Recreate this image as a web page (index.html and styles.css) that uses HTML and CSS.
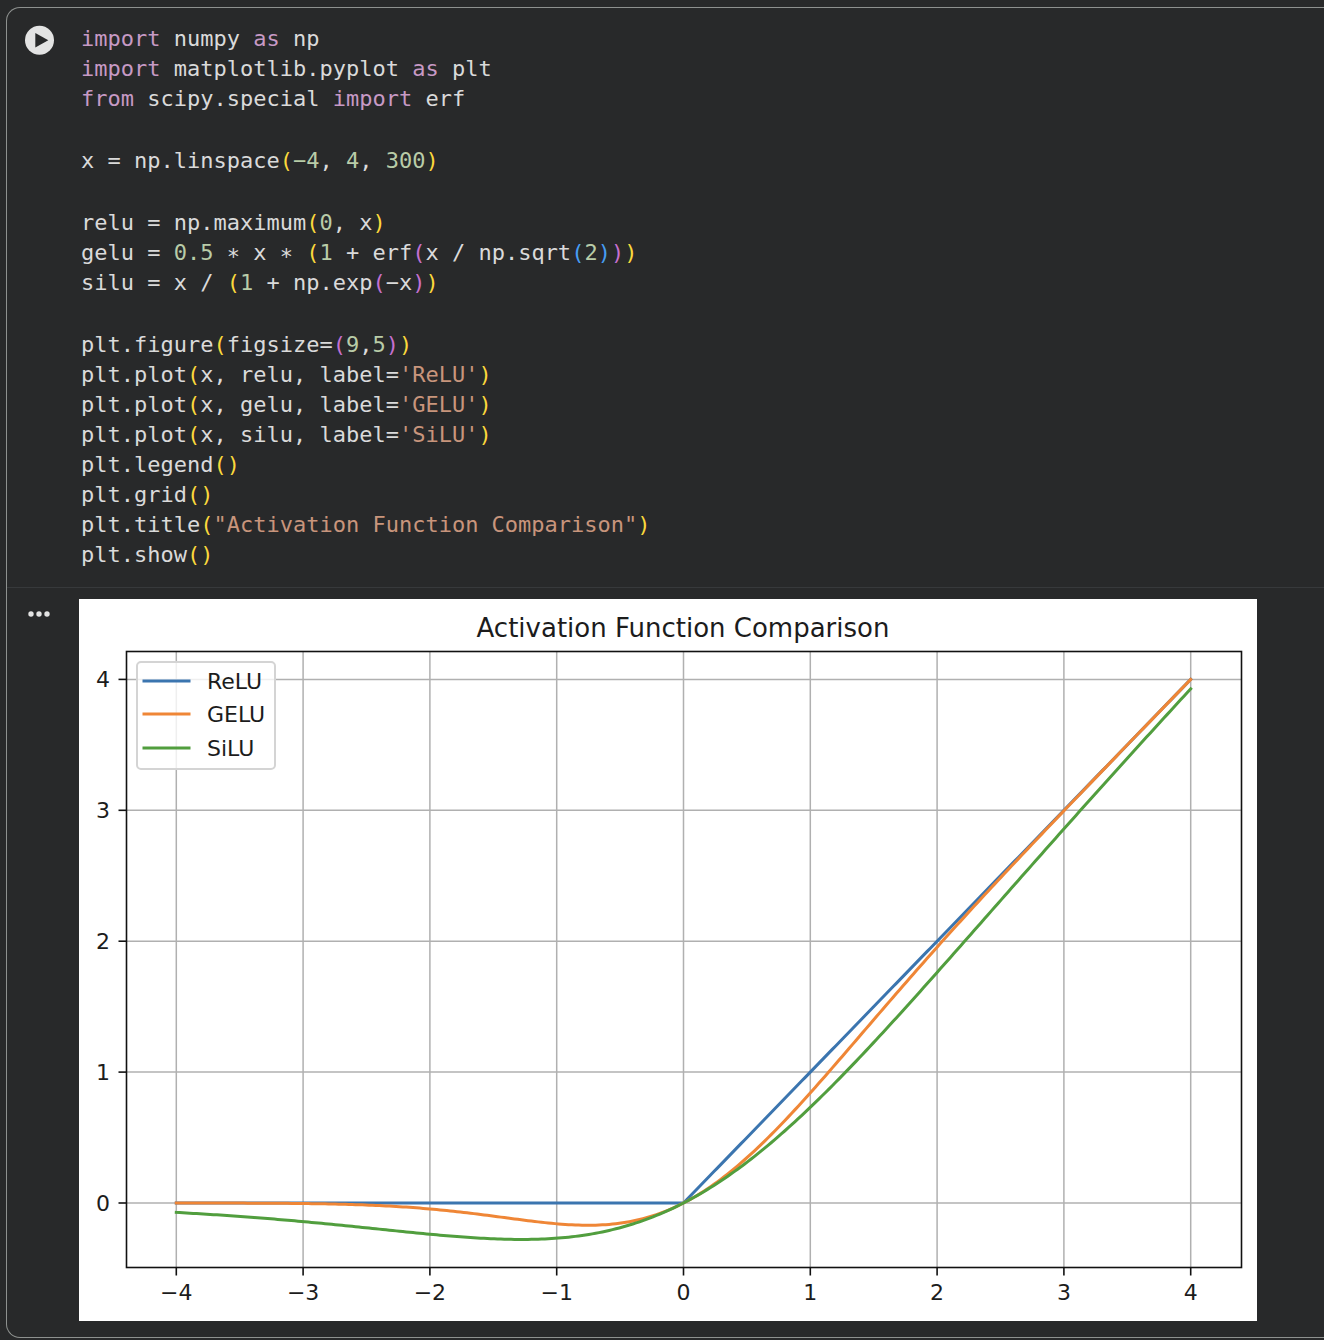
FILE: index.html
```html
<!DOCTYPE html>
<html lang="en">

<head>
    <meta charset="UTF-8">
    <meta name="viewport" content="width=device-width, initial-scale=1.0">
    <title>Activation Function Comparison</title>
    <link rel="stylesheet" href="styles.css">
</head>

<body>
    <main class="cell">
        <section class="cell-input">
            <div class="gutter">
                <button class="icon-button run-button" type="button" aria-label="Run cell">
                    <svg width="30" height="30" viewBox="0 0 30 30">
                        <circle cx="15.5" cy="15.3" r="14.5" fill="#e3e3e3"/>
                        <path d="M11.3 8v14.6L24.3 15.3z" fill="#28292a"/>
                    </svg>
                </button>
            </div>
            <div class="code">
<pre><span class="kw">import</span> numpy <span class="kw">as</span> np
<span class="kw">import</span> matplotlib.pyplot <span class="kw">as</span> plt
<span class="kw">from</span> scipy.special <span class="kw">import</span> erf</pre>
<pre>x = np.linspace<span class="b1">(</span><span class="num">−4</span>, <span class="num">4</span>, <span class="num">300</span><span class="b1">)</span></pre>
<pre>relu = np.maximum<span class="b1">(</span><span class="num">0</span>, x<span class="b1">)</span>
gelu = <span class="num">0.5</span> ∗ x ∗ <span class="b1">(</span><span class="num">1</span> + erf<span class="b2">(</span>x / np.sqrt<span class="b3">(</span><span class="num">2</span><span class="b3">)</span><span class="b2">)</span><span class="b1">)</span>
silu = x / <span class="b1">(</span><span class="num">1</span> + np.exp<span class="b2">(</span>−x<span class="b2">)</span><span class="b1">)</span></pre>
<pre>plt.figure<span class="b1">(</span>figsize=<span class="b2">(</span><span class="num">9</span>,<span class="num">5</span><span class="b2">)</span><span class="b1">)</span>
plt.plot<span class="b1">(</span>x, relu, label=<span class="str">'ReLU'</span><span class="b1">)</span>
plt.plot<span class="b1">(</span>x, gelu, label=<span class="str">'GELU'</span><span class="b1">)</span>
plt.plot<span class="b1">(</span>x, silu, label=<span class="str">'SiLU'</span><span class="b1">)</span>
plt.legend<span class="b1">()</span>
plt.grid<span class="b1">()</span>
plt.title<span class="b1">(</span><span class="str">"Activation Function Comparison"</span><span class="b1">)</span>
plt.show<span class="b1">()</span></pre>
            </div>
        </section>

        <section class="cell-output">
            <div class="gutter">
                <button class="icon-button" type="button" aria-label="Output actions">
                    <svg width="30" height="30" viewBox="0 0 30 30" fill="#e3e3e3">
                        <circle cx="7" cy="15" r="2.7"/>
                        <circle cx="15" cy="15" r="2.7"/>
                        <circle cx="23" cy="15" r="2.7"/>
                    </svg>
                </button>
            </div>
            <div class="figure">
                <svg class="chart" viewBox="0 0 1178 722" role="img" aria-label="Activation Function Comparison">
                    <g id="grid" class="grid"></g>
                    <g id="curves" class="curves"></g>
                    <rect class="frame" x="47.5" y="52.5" width="1115" height="616"/>
                    <g id="ticks" class="ticks"></g>
                    <text class="title" x="604" y="38">Activation Function Comparison</text>
                    <g class="legend">
                        <rect x="58" y="63" width="138" height="107" rx="4"/>
                        <path class="relu" d="M65 82H110"/>
                        <path class="gelu" d="M65 115H110"/>
                        <path class="silu" d="M65 149H110"/>
                        <text x="128" y="90">ReLU</text>
                        <text x="128" y="123">GELU</text>
                        <text x="128" y="157">SiLU</text>
                    </g>
                </svg>
            </div>
        </section>
    </main>

    <script src="script.js"></script>
</body>

</html>
```
FILE: styles.css
```css
* {
    margin: 0;
    padding: 0;
    box-sizing: border-box;
}

body {
    background: #28292a;
    color: #dadada;
    font-family: "DejaVu Sans", sans-serif;
    padding: 7px 0 2px 6px;
}

.cell {
    border: 1px solid #8e918f;
    border-right: none;
    border-radius: 14px 0 0 14px;
}

.cell-input,
.cell-output {
    display: flex;
}

.cell-input {
    padding: 16px 0 17px;
    border-bottom: 1px solid #37393b;
}

.cell-output {
    padding: 11px 0 16px;
}

.gutter {
    flex: 0 0 72px;
    padding-left: 17px;
}

.icon-button {
    display: block;
    width: 30px;
    height: 30px;
    background: none;
    border: none;
    cursor: pointer;
}

.run-button {
    margin-top: 1px;
}

.code {
    display: flex;
    flex-direction: column;
    gap: 32px;
    padding-left: 2px;
}

.code pre {
    font-family: "DejaVu Sans Mono", monospace;
    font-size: 22px;
    line-height: 30px;
}

.kw {
    color: #c79ac5;
}

.num {
    color: #b9cca8;
}

.str {
    color: #c8957c;
}

.b1 {
    color: #fbd83c;
}

.b2 {
    color: #c670cf;
}

.b3 {
    color: #479df2;
}

.figure {
    flex: 1;
    min-width: 0;
}

.chart {
    display: block;
    width: 100%;
    max-width: 1178px;
    background: #fff;
}

.chart text {
    font-size: 22px;
    fill: #1c1c1c;
}

.chart .title {
    font-size: 26px;
    text-anchor: middle;
}

.grid path {
    stroke: #b0b0b0;
    stroke-width: 1.5;
}

.frame {
    fill: none;
    stroke: #111;
    stroke-width: 1.6;
}

.ticks path {
    stroke: #111;
    stroke-width: 1.6;
}

.ticks .x-label {
    text-anchor: middle;
}

.ticks .y-label {
    text-anchor: end;
}

.curves path,
.legend path {
    fill: none;
    stroke-width: 3;
    stroke-linecap: square;
    stroke-linejoin: round;
}

.chart .relu {
    stroke: #3b75af;
}

.chart .gelu {
    stroke: #ef8636;
}

.chart .silu {
    stroke: #519e3e;
}

.legend rect {
    fill: rgba(255, 255, 255, 0.8);
    stroke: #d4d4d4;
    stroke-width: 2;
}
```
FILE: script.js
```js
const NS = "http://www.w3.org/2000/svg";
const plot = { left: 47.5, right: 1162.5, top: 52.5, bottom: 668.5 };

const toX = (x) => 604.5 + x * 126.8;
const toY = (y) => 604 - y * 130.9;

function add(parent, tag, attrs, text) {
    const el = document.createElementNS(NS, tag);
    for (const name in attrs) el.setAttribute(name, attrs[name]);
    if (text) el.textContent = text;
    document.getElementById(parent).appendChild(el);
}

// Abramowitz & Stegun 7.1.26
function erf(x) {
    const t = 1 / (1 + 0.3275911 * Math.abs(x));
    const poly = ((((1.061405429 * t - 1.453152027) * t + 1.421413741) * t - 0.284496736) * t + 0.254829592) * t;
    return Math.sign(x) * (1 - poly * Math.exp(-x * x));
}

for (let i = -4; i <= 4; i++) {
    const x = toX(i);
    add("grid", "path", { d: `M${x} ${plot.top}V${plot.bottom}` });
    add("ticks", "path", { d: `M${x} ${plot.bottom}v8` });
    add("ticks", "text", { class: "x-label", x: x, y: 701 }, String(i).replace("-", "−"));
}

for (let i = 0; i <= 4; i++) {
    const y = toY(i);
    add("grid", "path", { d: `M${plot.left} ${y}H${plot.right}` });
    add("ticks", "path", { d: `M${plot.left} ${y}h-8` });
    add("ticks", "text", { class: "y-label", x: 31, y: y + 8 }, String(i));
}

const curves = {
    relu: (x) => Math.max(0, x),
    gelu: (x) => 0.5 * x * (1 + erf(x / Math.SQRT2)),
    silu: (x) => x / (1 + Math.exp(-x))
};

for (const name in curves) {
    const points = [];
    for (let i = 0; i <= 300; i++) {
        const x = -4 + (8 * i) / 300;
        points.push(`${toX(x).toFixed(2)} ${toY(curves[name](x)).toFixed(2)}`);
    }
    add("curves", "path", { class: name, d: "M" + points.join("L") });
}
```
